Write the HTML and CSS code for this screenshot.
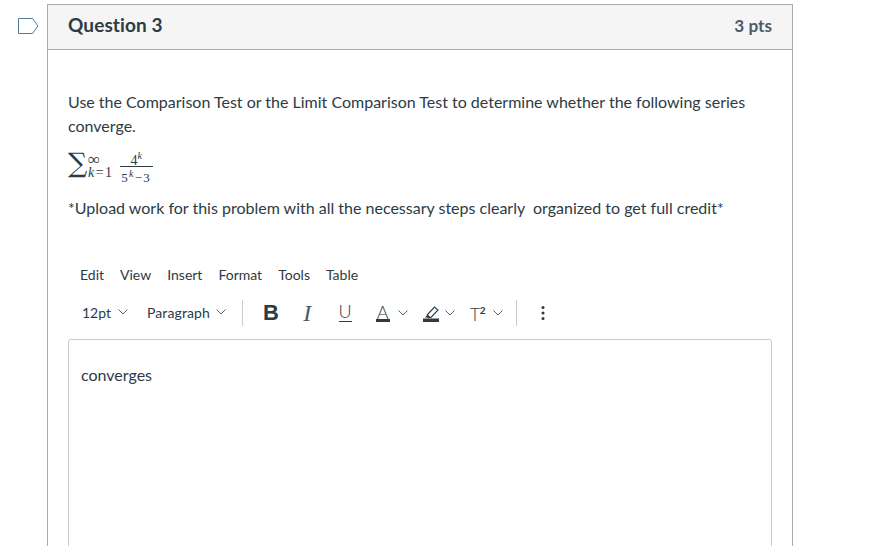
FILE: index.html
```html
<!DOCTYPE html>
<html lang="en">
<head>
    <meta charset="UTF-8">
    <meta name="viewport" content="width=device-width, initial-scale=1.0">
    <title>Question 3</title>
    <link rel="stylesheet" href="styles.css">
</head>
<body>
    <div class="page">
        <div class="flag">
            <svg width="21" height="16" viewBox="0 0 21 16">
                <path d="M.5.5H14.500L20 8L14.500 15.500H.5Z" fill="none" stroke="#4d7a9c" stroke-width="1"/>
            </svg>
        </div>

        <div class="question">
            <header class="question-header">
                <h2>Question 3</h2>
                <span class="points">3 pts</span>
            </header>

            <div class="question-body">
                <p class="prompt">Use the Comparison Test or the Limit Comparison Test to determine whether the following series converge.</p>

                <div class="formula">
                    <span class="sigma">&sum;</span>
                    <span class="limits">
                        <span class="upper">&infin;</span>
                        <span class="lower"><i>k</i>=1</span>
                    </span>
                    <span class="fraction">
                        <span class="numerator">4<sup><i>k</i></sup></span>
                        <span class="denominator">5<sup><i>k</i></sup>&minus;3</span>
                    </span>
                </div>

                <p class="note">*Upload work for this problem with all the necessary steps clearly&nbsp; organized to get full credit*</p>

                <nav class="menubar">
                    <span>Edit</span>
                    <span>View</span>
                    <span>Insert</span>
                    <span>Format</span>
                    <span>Tools</span>
                    <span>Table</span>
                </nav>

                <div class="toolbar">
                    <div class="tool-group group-text">
                        <span class="select size-select">12pt <svg class="chev" viewBox="0 0 10 6"><path d="M.5.5 5 5 9.500.5"/></svg></span>
                        <span class="select select-block">Paragraph <svg class="chev" viewBox="0 0 10 6"><path d="M.5.5 5 5 9.500.5"/></svg></span>
                    </div>
                    <div class="tool-group group-format">
                        <span class="tool tool-bold">B</span>
                        <span class="tool tool-italic">I</span>
                        <span class="tool tool-underline"><span>U</span></span>
                        <span class="tool tool-color tool-a">
                            <span class="color-a">A</span>
                            <svg class="chev" viewBox="0 0 10 6"><path d="M.5.5 5 5 9.500.5"/></svg>
                        </span>
                        <span class="tool tool-color tool-marker">
                            <svg class="marker" width="16" height="17" viewBox="0 0 16 17">
                                <path d="M4.500 9.500 11.500 2 15 5 8 12.500H5Z" fill="none" stroke="#2d3b45" stroke-width="1.100"/>
                                <path d="M4.500 9.500 8 12.500 5 12.500H2Z" fill="#2d3b45"/>
                                <rect x="0" y="13.500" width="16" height="3.500" fill="#2d3b45"/>
                            </svg>
                            <svg class="chev" viewBox="0 0 10 6"><path d="M.5.5 5 5 9.500.5"/></svg>
                        </span>
                        <span class="tool tool-color">
                            <span class="sup-t">T<sup>2</sup></span>
                            <svg class="chev" viewBox="0 0 10 6"><path d="M.5.5 5 5 9.500.5"/></svg>
                        </span>
                    </div>
                    <div class="tool-group group-more">
                        <svg width="4" height="16" viewBox="0 0 4 16">
                            <circle cx="2" cy="2.500" r="1.500" fill="#2d3b45"/>
                            <circle cx="2" cy="8" r="1.500" fill="#2d3b45"/>
                            <circle cx="2" cy="13.500" r="1.500" fill="#2d3b45"/>
                        </svg>
                    </div>
                </div>

                <div class="editor">converges</div>
            </div>
        </div>
    </div>
</body>
</html>
```

FILE: styles.css
```css
html, body {
    height: 100%;
}

body {
    font-family: Lato, "Open Sans", sans-serif;
    margin: 0;
    padding: 0;
    background-color: #fff;
    color: #2d3b45;
    overflow: hidden;
}

.page {
    display: flex;
    align-items: flex-start;
    height: 546px;
    overflow: hidden;
}

.flag {
    width: 47px;
    padding: 18px 0 0 18px;
    box-sizing: border-box;
    flex: none;
}

.flag svg {
    display: block;
}

.question {
    width: 746px;
    box-sizing: border-box;
    margin-top: 4px;
    border: 1px solid #aaa;
    border-bottom: 0;
    flex: none;
}

.question-header {
    display: flex;
    justify-content: space-between;
    align-items: center;
    height: 39px;
    padding: 0 20px 5px;
    background-color: #f5f5f5;
    border-bottom: 1px solid #aaa;
}

.question-header h2 {
    margin: 0;
    font-size: 19px;
    font-weight: 700;
    letter-spacing: 0.1px;
}

.points {
    font-size: 17.200px;
    font-weight: 700;
    color: #4d5c66;
    padding-top: 1px;
}

.question-body {
    padding: 40px 20px 0;
}

.prompt {
    margin: 0;
    font-size: 16px;
    line-height: 24px;
}

.formula {
    display: flex;
    align-items: flex-start;
    height: 36px;
    margin-top: 10px;
    font-family: "Liberation Serif", "DejaVu Serif", serif;
}

.sigma {
    width: 20px;
    margin-top: 2px;
    font-family: "DejaVu Serif", serif;
    font-size: 27px;
    font-weight: 400;
    line-height: 26px;
}

.limits {
    display: flex;
    flex-direction: column;
    padding-top: 6px;
    font-size: 14px;
    line-height: 13px;
    letter-spacing: 1.500px;
}

.upper {
    font-size: 17px;
    line-height: 12px;
}

.fraction {
    display: flex;
    flex-direction: column;
    align-items: center;
    width: 33px;
    margin: 2px 0 0 6px;
    font-size: 14px;
    line-height: 15px;
}

.numerator {
    align-self: stretch;
    height: 13px;
    padding-top: 3px;
    border-bottom: 1px solid #2d3b45;
    text-align: center;
}

.denominator {
    padding-top: 3px;
    font-size: 13px;
    letter-spacing: 1.200px;
}

.fraction sup {
    font-size: 10px;
    line-height: 0;
}

.note {
    margin: 12px 0 0;
    font-size: 16px;
    line-height: 24px;
}

.menubar {
    display: flex;
    gap: 16px;
    margin-top: 45px;
    padding-left: 12px;
    font-size: 14px;
    line-height: 20px;
}

.toolbar {
    display: flex;
    align-items: center;
    height: 26px;
    margin-top: 15px;
    font-size: 14px;
}

.tool-group {
    display: flex;
    align-items: center;
    height: 26px;
}

.group-text {
    width: 175px;
    padding: 0 0 2px 14px;
    box-sizing: border-box;
    gap: 19px;
}

.group-text,
.group-format {
    border-right: 1px solid #c7cdd1;
}

.group-format {
    width: 274px;
    box-sizing: border-box;
    padding-left: 20px;
}

.group-more {
    padding-left: 24px;
}

.select {
    display: flex;
    align-items: center;
    gap: 7px;
}

.select-block {
    gap: 6px;
    letter-spacing: 0.1px;
}

.chev {
    width: 10px;
    height: 6px;
    fill: none;
    stroke: #2d3b45;
    stroke-width: 0.800;
}

.tool {
    display: flex;
    align-items: center;
}

.tool-bold {
    width: 40px;
    font-family: "Liberation Sans", Arial, sans-serif;
    font-size: 22px;
    font-weight: 700;
}

.tool-italic {
    width: 37px;
    padding-left: 1px;
    box-sizing: border-box;
    font-family: "Liberation Serif", serif;
    font-size: 24px;
    font-style: italic;
    font-weight: 400;
    color: #4d5c66;
}

.tool-underline {
    width: 38px;
}

.tool-underline span {
    height: 17px;
    font-size: 18px;
    font-weight: 300;
    line-height: 15px;
    border-bottom: 1px solid #2d3b45;
}

.tool-color {
    gap: 7px;
    width: 47px;
}

.tool-a {
    gap: 8px;
    width: 48px;
}

.tool-marker {
    gap: 6px;
    width: 48px;
}

.color-a {
    height: 14px;
    padding: 0 1px;
    font-size: 18px;
    font-weight: 300;
    line-height: 15px;
    border-bottom: 3px solid #2d3b45;
}

.marker {
    flex: none;
}

.sup-t {
    padding-top: 3px;
    font-size: 17px;
    font-weight: 300;
}

.sup-t sup {
    font-size: 10px;
    font-weight: 700;
    line-height: 0;
}

.editor {
    height: 300px;
    margin-top: 13px;
    padding: 25px 12px 0;
    border: 1px solid #c7cdd1;
    border-radius: 3px;
    font-size: 16px;
    line-height: 20px;
}
```
